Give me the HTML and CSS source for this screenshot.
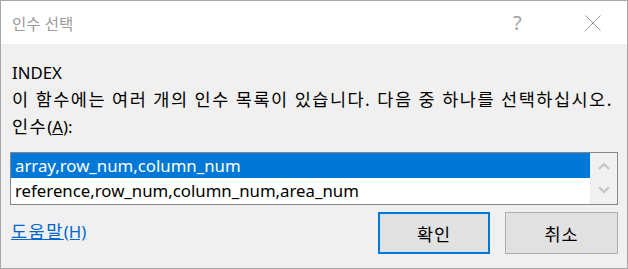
FILE: index.html
```html
<!DOCTYPE html>
<html lang="ko">
<head>
    <meta charset="UTF-8">
    <title>인수 선택</title>
    <link rel="stylesheet" href="styles.css">
</head>
<body>
    <div class="dialog">
        <!-- Barra de título -->
        <div class="titlebar">
            <span class="title">인수 선택</span>
            <span class="help-btn">?</span>
            <span class="close-btn">
                <svg width="16" height="16" viewBox="0 0 16 16">
                    <path d="M0.5 0.5 L15.5 15.5 M15.5 0.5 L0.5 15.5" stroke="#9a9a9a" stroke-width="1" fill="none"/>
                </svg>
            </span>
        </div>

        <div class="content">
            <div class="line">INDEX</div>
            <div class="line ko">이 함수에는 여러 개의 인수 목록이 있습니다. 다음 중 하나를 선택하십시오.</div>
            <div class="line"><span class="ko">인수</span>(<u>A</u>):</div>

            <!-- Lista de argumentos -->
            <div class="listbox">
                <div class="rows">
                    <div class="row selected">array,row_num,column_num</div>
                    <div class="row">reference,row_num,column_num,area_num</div>
                </div>
                <div class="scrollbar">
                    <svg width="12" height="8" viewBox="0 0 12 8">
                        <path d="M1 7 L6 2 L11 7" stroke="#c4c4c4" stroke-width="2" fill="none"/>
                    </svg>
                    <svg width="12" height="8" viewBox="0 0 12 8">
                        <path d="M1 1 L6 6 L11 1" stroke="#c4c4c4" stroke-width="2" fill="none"/>
                    </svg>
                </div>
            </div>

            <div class="footer">
                <a class="help-link" href="#"><span class="ko">도움말</span>(H)</a>
                <div class="buttons">
                    <button class="btn default">확인</button>
                    <button class="btn">취소</button>
                </div>
            </div>
        </div>
    </div>
</body>
</html>
```

FILE: styles.css
```css
body {
    margin: 0;
    font-family: "Noto Sans", "Noto Sans CJK KR", sans-serif;
    font-size: 16.8px;
    color: #000;
}
.dialog {
    width: 628px;
    height: 269px;
    box-sizing: border-box;
    border: 1px solid #a6a6a6;
    background: #f0f0f0;
    display: flex;
    flex-direction: column;
}
.titlebar {
    height: 43px;
    background: #fff;
    display: flex;
    align-items: center;
    padding-left: 11px;
    flex-shrink: 0;
}
.title {
    flex: 1;
    color: #9a9a9a;
    font-family: "Noto Sans CJK KR", sans-serif;
    font-size: 15.5px;
}
.help-btn {
    color: #a0a0a0;
    font-size: 20px;
    width: 16px;
    margin-right: 56px;
}
.close-btn {
    display: flex;
    margin-right: 26px;
}
.content {
    padding: 15px 9px 0 9px;
    display: flex;
    flex-direction: column;
}
.line {
    height: 27px;
    line-height: 27px;
    padding-left: 2px;
    white-space: nowrap;
}
.ko {
    font-size: 17.5px;
    letter-spacing: 1.5px;
}
.listbox {
    margin-top: 12px;
    height: 51px;
    border: 1px solid #828790;
    background: #fff;
    display: flex;
}
.rows {
    flex: 1;
}
.row {
    height: 25px;
    line-height: 25px;
    padding-left: 4px;
    white-space: nowrap;
}
.row.selected {
    background: #0078d7;
    color: #fff;
}
.scrollbar {
    width: 27px;
    background: #f0f0f0;
    display: flex;
    flex-direction: column;
    align-items: center;
    justify-content: space-between;
    padding: 9px 0 10px;
    box-sizing: border-box;
}
.footer {
    margin-top: 7px;
    display: flex;
    justify-content: space-between;
}
.help-link {
    color: #0066cc;
    text-decoration: underline;
    line-height: 20px;
    margin-top: 9px;
    padding-left: 1px;
}
.buttons {
    display: flex;
    gap: 15px;
}
.btn {
    width: 113px;
    height: 42px;
    background: #e1e1e1;
    border: 1px solid #adadad;
    font-family: "Noto Sans CJK KR", sans-serif;
    font-size: 17.5px;
    letter-spacing: 1px;
    color: #000;
    padding: 0;
}
.btn.default {
    width: 112px;
    border: 2px solid #0078d7;
}
```
